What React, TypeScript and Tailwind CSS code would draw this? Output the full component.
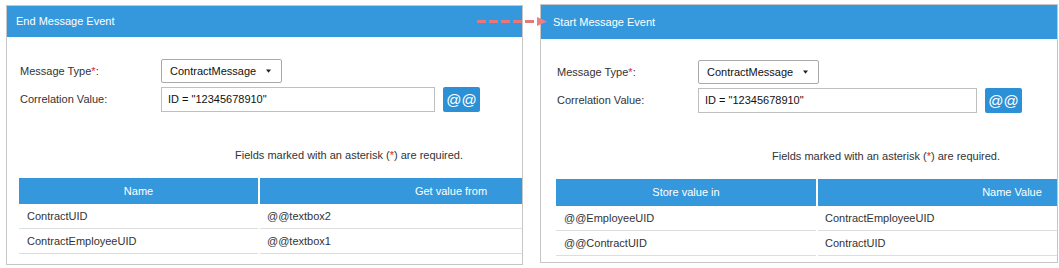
type Row = [string, string];

interface PanelProps {
    title: string;
    headerH: string;
    padL: string;
    bodyTop: string;
    inputW: string;
    btnW: string;
    noteMt: string;
    notePl: string;
    tableMt: string;
    col1: string;
    col2: string;
    headH: string;
    heads: [string, string];
    rows: Row[];
    panelW: string;
    panelH: string;
}

const Caret = () => (
    <svg width="5" height="4" viewBox="0 0 5 4" className="ml-auto">
        <path d="M0 0.5 L5 0.5 L2.5 3.8 Z" fill="#222" />
    </svg>
);

const Panel = (p: PanelProps) => (
    <div className={`${p.panelW} ${p.panelH} overflow-hidden border border-[#c6c6c6] bg-white`}>
        <div className={`${p.headerH} flex items-center bg-[#3598dc] text-white ${p.padL === 'left' ? 'pl-[9px]' : 'pl-[12px]'}`}>
            {p.title}
        </div>
        <div className={`${p.bodyTop} ${p.padL === 'left' ? 'pl-[13px]' : 'pl-[16px]'}`}>
            <div className="flex h-[24px] items-center">
                <div className="w-[141px]">
                    Message Type<span className="text-[#e02222]">*</span>:
                </div>
                <div className="flex h-[24px] w-[121px] items-center rounded-[2px] border border-[#a9a9a9] pl-[8px] pr-[10px] text-[#111]">
                    ContractMessage
                    <Caret />
                </div>
            </div>
            <div className="mt-[4px] flex h-[25px] items-center">
                <div className="w-[141px]">Correlation Value:</div>
                <div className={`${p.inputW} flex h-[25px] items-center border border-[#bfbfbf] pl-[6px] text-[#111]`}>
                    ID = "12345678910"
                </div>
                <div className={`${p.btnW} ml-[8px] flex h-[25px] items-center justify-center rounded-[2px] bg-[#2c90d6] text-[15px] leading-none text-white`}>
                    @@
                </div>
            </div>
        </div>
        <div className={`${p.noteMt} ${p.notePl} leading-[13px]`}>
            Fields marked with an asterisk (<span className="text-[#e02222]">*</span>) are required.
        </div>
        <div className={`${p.tableMt} ${p.padL === 'left' ? 'ml-[12px]' : 'ml-[15px]'} w-max`}>
            <div className={`flex gap-[2px] ${p.headH} text-white`}>
                <div className={`${p.col1} flex items-center justify-center bg-[#3598dc]`}>{p.heads[0]}</div>
                <div className={`${p.col2} flex items-center justify-center bg-[#3598dc]`}>{p.heads[1]}</div>
            </div>
            {p.rows.map(([a, b]) => (
                <div key={a} className="flex h-[25px] gap-[2px]">
                    <div className={`${p.col1} flex items-center border-b border-[#dedede] pl-[8px]`}>{a}</div>
                    <div className={`${p.col2} flex items-center border-b border-[#dedede] pl-[7px]`}>{b}</div>
                </div>
            ))}
        </div>
    </div>
);

export default function App() {
    return (
        <div className="relative h-[268px] w-[1059px] bg-white font-['Liberation_Sans',Arial,sans-serif] text-[11px] text-[#333]">
            <div className="flex items-start gap-[17px] pl-[6px] pt-[4px]">
                <div className="mt-[1px]">
                    <Panel
                        title="End Message Event"
                        panelW="w-[517px]"
                        panelH="h-[260px]"
                        headerH="h-[31px]"
                        padL="left"
                        bodyTop="pt-[22px]"
                        inputW="w-[274px]"
                        btnW="w-[37px]"
                        noteMt="mt-[37px]"
                        notePl="pl-[228px]"
                        tableMt="mt-[16px]"
                        col1="w-[239px]"
                        col2="w-[382px]"
                        headH="h-[26px]"
                        heads={['Name', 'Get value from']}
                        rows={[
                            ['ContractUID', '@@textbox2'],
                            ['ContractEmployeeUID', '@@textbox1'],
                        ]}
                    />
                </div>
                <Panel
                    title="Start Message Event"
                    panelW="w-[518px]"
                    panelH="h-[259px]"
                    headerH="h-[34px]"
                    padL="right"
                    bodyTop="pt-[21px]"
                    inputW="w-[279px]"
                    btnW="w-[37px]"
                    noteMt="mt-[37px]"
                    notePl="pl-[231px]"
                    tableMt="mt-[16px]"
                    col1="w-[260px]"
                    col2="w-[388px]"
                    headH="h-[27px]"
                    heads={['Store value in', 'Name Value']}
                    rows={[
                        ['@@EmployeeUID', 'ContractEmployeeUID'],
                        ['@@ContractUID', 'ContractUID'],
                    ]}
                />
            </div>
            <svg className="absolute left-[476px] top-[15px]" width="74" height="13" viewBox="0 0 74 13">
                <line x1="1" y1="6.5" x2="62" y2="6.5" stroke="#e8777a" strokeWidth="3" strokeDasharray="9 3" />
                <path d="M61 2 L71 6.5 L61 11 Z" fill="#ec7f84" />
            </svg>
        </div>
    );
}
